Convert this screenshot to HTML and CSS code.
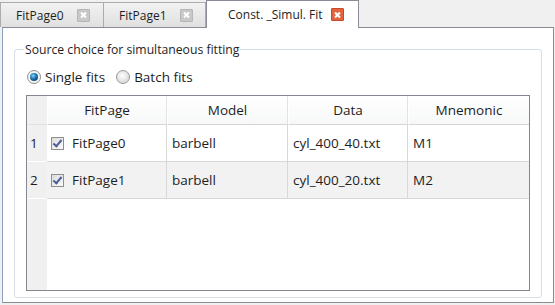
FILE: index.html
```html
<!DOCTYPE html>
<html lang="en">
<head>
  <meta charset="UTF-8">
  <title>Const. _Simul. Fit</title>
  <link rel="stylesheet" href="styles.css">
</head>
<body>
  <div class="tabbar">
    <div class="tab">FitPage0 <span class="close"></span></div>
    <div class="tab">FitPage1 <span class="close"></span></div>
    <div class="tab active">Const. _Simul. Fit <span class="close red"></span></div>
  </div>

  <div class="pane">
    <fieldset class="group">
      <legend>Source choice for simultaneous fitting</legend>

      <div class="radios">
        <label class="radio">
          <svg width="14" height="14" viewBox="0 0 14 14">
            <defs>
              <radialGradient id="dot" cx="0.4" cy="0.35" r="0.7">
                <stop offset="0" stop-color="#8fd4f5"/>
                <stop offset="0.5" stop-color="#1f7dbb"/>
                <stop offset="1" stop-color="#0c3d66"/>
              </radialGradient>
            </defs>
            <circle cx="7" cy="7" r="6.5" fill="#f4f4f4" stroke="#8e8f8f"/>
            <circle cx="7" cy="7" r="4" fill="url(#dot)"/>
          </svg>
          Single fits
        </label>
        <label class="radio">
          <svg width="14" height="14" viewBox="0 0 14 14">
            <defs>
              <radialGradient id="off" cx="0.45" cy="0.4" r="0.7">
                <stop offset="0" stop-color="#ffffff"/>
                <stop offset="1" stop-color="#cfcfcf"/>
              </radialGradient>
            </defs>
            <circle cx="7" cy="7" r="6.5" fill="url(#off)" stroke="#9a9a9a"/>
          </svg>
          Batch fits
        </label>
      </div>

      <div class="grid">
        <div class="corner"></div>
        <div class="head">FitPage</div>
        <div class="head">Model</div>
        <div class="head">Data</div>
        <div class="head last">Mnemonic</div>

        <div class="num">1</div>
        <div class="cell"><span class="check"></span>FitPage0</div>
        <div class="cell">barbell</div>
        <div class="cell">cyl_400_40.txt</div>
        <div class="cell last">M1</div>

        <div class="num">2</div>
        <div class="cell alt"><span class="check"></span>FitPage1</div>
        <div class="cell alt">barbell</div>
        <div class="cell alt">cyl_400_20.txt</div>
        <div class="cell alt last">M2</div>

        <div class="num filler"></div>
        <div class="empty"></div>
      </div>
    </fieldset>
  </div>
</body>
</html>
```

FILE: styles.css
```css
body {
  margin: 0;
  height: 305px;
  background: #f0f0f0;
  font-family: "Open Sans", sans-serif;
  font-size: 12px;
  color: #1e1e1e;
  display: flex;
  flex-direction: column;
}
.tabbar {
  display: flex;
  align-items: flex-end;
  height: 27px;
  position: relative;
  z-index: 1;
}
.tab {
  box-sizing: border-box;
  height: 25px;
  width: 104px;
  padding-left: 15px;
  display: flex;
  align-items: center;
  gap: 13px;
  border: 1px solid #acacac;
  border-bottom: none;
  background: linear-gradient(#f2f2f2, #e0e0e0);
}
.tab + .tab {
  width: 102px;
  border-left: none;
}
.tab.active {
  height: 28px;
  width: 153px;
  margin-bottom: -1px;
  padding-left: 21px;
  gap: 8px;
  background: #fff;
  border: 1px solid #898c95;
  border-bottom: none;
}
.close {
  width: 11px;
  height: 11px;
  border: 1px solid #b6b6b6;
  background: #c8c8c8;
  border-radius: 1px;
  position: relative;
}
.close::before,
.close::after {
  content: "";
  position: absolute;
  left: 2px;
  top: 4.5px;
  width: 7px;
  height: 2px;
  background: #fff;
  transform: rotate(45deg);
}
.close::after {
  transform: rotate(-45deg);
}
.close.red {
  background: #e2643e;
  border-color: #c9472a;
}
.pane {
  flex: 1;
  margin: 0 1px 2px 2px;
  background: #fff;
  border: 1px solid #898c95;
  border-left-color: #8ea3c0;
  display: flex;
}
.group {
  flex: 1;
  margin: 13px 11px 4px 11px;
  padding: 0 11px 6px 11px;
  border: 1px solid #d5dfe5;
  border-radius: 3px;
  display: flex;
  flex-direction: column;
  min-width: 0;
}
.group legend {
  padding: 0 1px;
  margin-left: -2px;
  font-size: 12.2px;
}
.radios {
  display: flex;
  gap: 11px;
  margin: 10px 0 9px 1px;
  font-size: 13.5px;
}
.radio {
  display: flex;
  align-items: center;
  gap: 4px;
}
.grid {
  flex: 1;
  display: grid;
  grid-template-columns: 20px 120px 121px 120px 1fr;
  grid-template-rows: 29px 37px 37px 1fr;
  border: 1px solid #828790;
  font-size: 13.5px;
}
.corner {
  background: #f0f0f0;
  border-bottom: 1px solid #e2e2e2;
}
.head {
  display: flex;
  align-items: center;
  justify-content: center;
  background: linear-gradient(#ffffff, #f7f8f9);
  border-right: 1px solid #e3e3e3;
  border-bottom: 1px solid #d5d5d5;
  border-left: 1px solid #fff;
}
.head.last {
  border-right: none;
}
.num {
  background: #f0f0f0;
  display: flex;
  align-items: center;
  padding-left: 3px;
  border-bottom: 1px solid #fff;
}
.num.filler {
  border-bottom: none;
}
.cell {
  display: flex;
  align-items: center;
  padding-left: 5px;
  border-right: 1px solid #d8d8d8;
  border-bottom: 1px solid #d8d8d8;
}
.cell.alt {
  background: #f2f2f2;
}
.cell.last {
  border-right: none;
}
.check {
  box-sizing: border-box;
  width: 13px;
  height: 13px;
  margin: 0 8px 0 -1px;
  border: 1px solid #8f8f8f;
  background: linear-gradient(135deg, #dcdcdc, #fafafa);
  position: relative;
}
.check::after {
  content: "";
  position: absolute;
  left: 3px;
  top: 0px;
  width: 3px;
  height: 7px;
  border: solid #4a5f97;
  border-width: 0 2px 2px 0;
  transform: rotate(40deg);
}
.empty {
  grid-column: 2 / 6;
}
```
